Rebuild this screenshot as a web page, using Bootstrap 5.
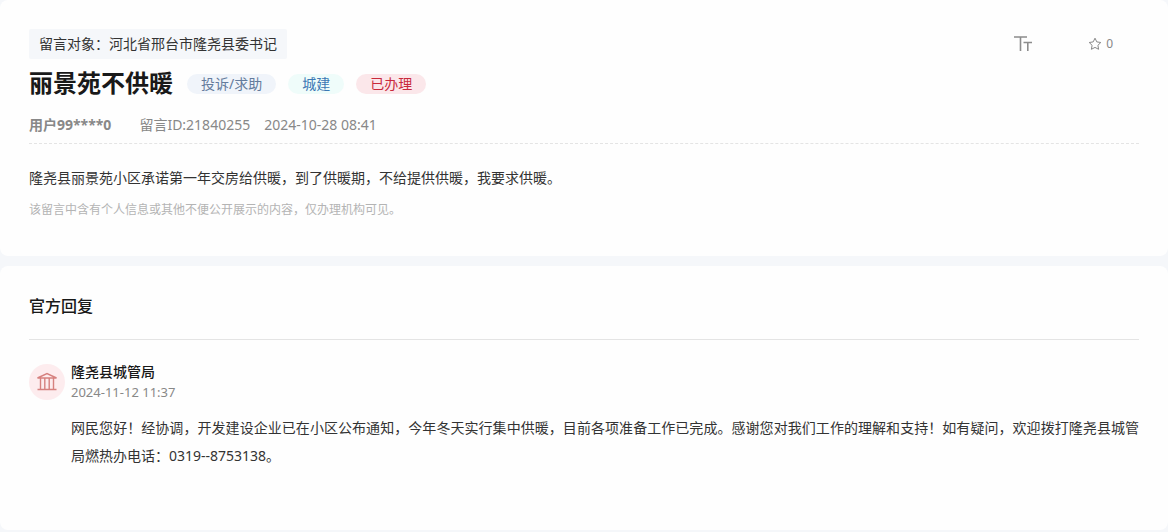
<!DOCTYPE html>
<html lang="zh-CN">
<head>
<meta charset="utf-8">
<meta name="viewport" content="width=device-width, initial-scale=1">
<title>丽景苑不供暖</title>
<link href="https://cdn.jsdelivr.net/npm/bootstrap@5.3.0/dist/css/bootstrap.min.css" rel="stylesheet">
<style>
body{background:#f5f7fa;color:#333;font:14px/28px "Noto Sans","Noto Sans CJK SC",sans-serif}
.panel{background:#fefefe;border-radius:8px}
.message{padding:29px 29px 36px;margin-bottom:10px}
.reply{padding:24px 29px 60px}
.target{background:#f5f7fa;line-height:30px;padding:0 10px;border-radius:2px}
.title{font-size:24px;line-height:32px;font-weight:700;color:#191919;margin-right:14px}
.tags{gap:12px;padding-top:2px}
.tag{line-height:20px;border-radius:10px;padding:0 14px}
.tag-type{background:#f0f4fa;color:#647b9c}
.tag-field{background:#effcfa;color:#3c78b4}
.tag-state{background:#fbe7ea;color:#c92a3c}
.tool{color:#888;line-height:20px;font-size:12px}
.tools{gap:56px;margin-right:26px}
.meta{color:#888;line-height:20px;padding-bottom:8px;border-bottom:1px dashed #e4e4e4}
.meta-date{margin-left:14px}
.user{margin-right:28px}
.note{font-size:12px;line-height:20px;color:#b4b4b4}
.heading{font-size:16px;line-height:32px;font-weight:500;color:#191919;margin-bottom:22px;padding-bottom:17px;border-bottom:1px solid #e4e4e4}
.avatar{width:36px;height:36px;background:#fdecee;margin-right:6px}
.agency{line-height:20px;font-weight:500;color:#191919;font-size:14px}
.stamp{line-height:20px;font-size:13px;color:#888}
.answer{margin:12px 0 0 42px;line-height:28px;text-align:justify}
</style>
</head>
<body>
<main>
  <article class="panel message">
    <div class="d-flex justify-content-between align-items-center">
      <div class="target">留言对象：河北省邢台市隆尧县委书记</div>
      <div class="tools d-flex align-items-center">
        <button type="button" class="tool btn p-0 border-0 d-flex" aria-label="字体大小">
          <svg width="18" height="18" viewBox="0 0 18 18" fill="none" stroke="#8c8c8c" stroke-width="1.6"><path d="M0 2H13M6.500 2V16M9.500 7.500H18M13.800 7.500V16"/></svg>
        </button>
        <button type="button" class="tool btn p-0 border-0 d-flex align-items-center gap-1" aria-label="收藏 0">
          <svg width="14" height="14" viewBox="0 0 14 14" fill="none" stroke="#888" stroke-linejoin="round"><path d="M7 1.200 8.800 4.900 12.800 5.500 9.900 8.300 10.600 12.300 7 10.400 3.400 12.300 4.100 8.300 1.200 5.500 5.200 4.900Z"/></svg>
          <span>0</span>
        </button>
      </div>
    </div>
    <div class="d-flex align-items-center mt-2 mb-3">
      <h1 class="title mb-0">丽景苑不供暖</h1>
      <div class="d-flex tags">
        <span class="tag tag-type">投诉/求助</span>
        <span class="tag tag-field">城建</span>
        <span class="tag tag-state">已办理</span>
      </div>
    </div>
    <div class="meta d-flex">
      <strong class="user">用户99****0</strong>
      <span>留言ID:21840255</span>
      <time class="meta-date" datetime="2024-10-28T08:41">2024-10-28 08:41</time>
    </div>
    <p class="mt-3 mb-2 pt-1">隆尧县丽景苑小区承诺第一年交房给供暖，到了供暖期，不给提供供暖，我要求供暖。</p>
    <p class="note mb-0">该留言中含有个人信息或其他不便公开展示的内容，仅办理机构可见。</p>
  </article>
  <section class="panel reply">
    <h2 class="heading">官方回复</h2>
    <div class="d-flex align-items-center">
      <div class="avatar rounded-circle d-flex align-items-center justify-content-center">
        <svg width="20" height="20" viewBox="0 0 20 20" fill="none" stroke="#d6817f" stroke-width="1.400" aria-hidden="true"><path d="M.5 6 10 1.500 19.500 6ZM3.500 6V17M7.800 6V17M12.200 6V17M16.500 6V17M.5 17.500H19.500"/></svg>
      </div>
      <div>
        <h3 class="agency mb-0">隆尧县城管局</h3>
        <time class="stamp d-block" datetime="2024-11-12T11:37">2024-11-12 11:37</time>
      </div>
    </div>
    <p class="answer">网民您好！经协调，开发建设企业已在小区公布通知，今年冬天实行集中供暖，目前各项准备工作已完成。感谢您对我们工作的理解和支持！如有疑问，欢迎拨打隆尧县城管局燃热办电话：0319--8753138。</p>
  </section>
</main>
<script src="https://cdn.jsdelivr.net/npm/bootstrap@5.3.0/dist/js/bootstrap.bundle.min.js"></script>
</body>
</html>
